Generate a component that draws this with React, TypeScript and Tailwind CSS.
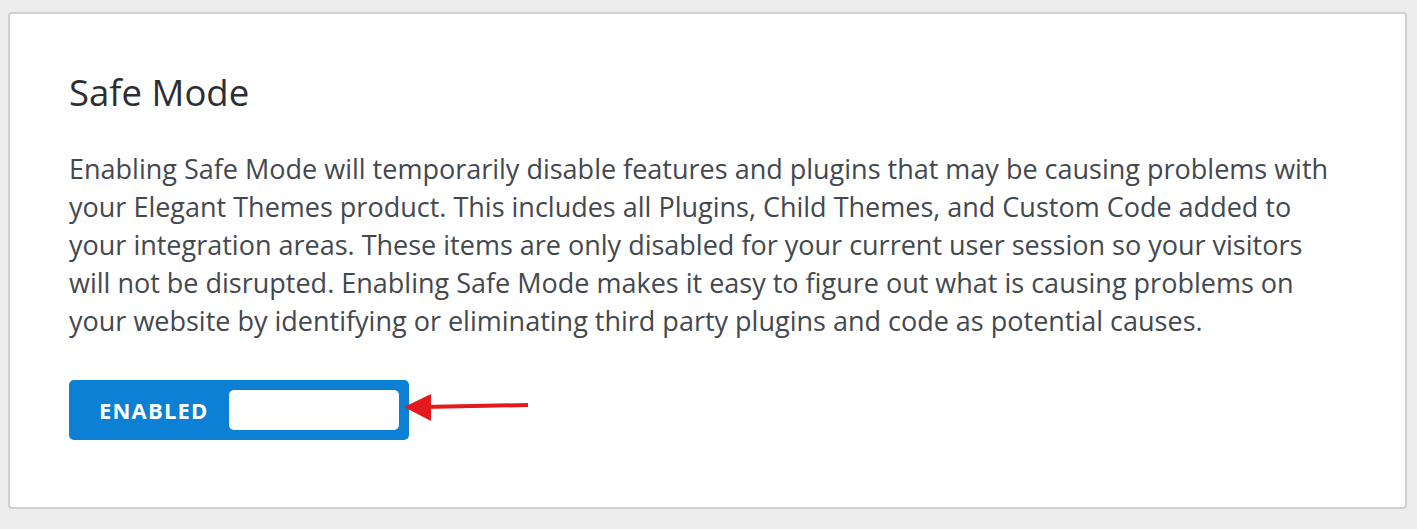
const lines = [
  "Enabling Safe Mode will temporarily disable features and plugins that may be causing problems with",
  "your Elegant Themes product. This includes all Plugins, Child Themes, and Custom Code added to",
  "your integration areas. These items are only disabled for your current user session so your visitors",
  "will not be disrupted. Enabling Safe Mode makes it easy to figure out what is causing problems on",
  "your website by identifying or eliminating third party plugins and code as potential causes.",
]

export default function App() {
  return (
    <div
      className="min-h-[529px] w-full bg-[#ededee] pt-3 pl-2 pr-[10px] pb-5"
      style={{ fontFamily: '"Open Sans", "Noto Sans", sans-serif' }}
    >
      <div className="h-[497px] rounded-[4px] border-2 border-[#d0d0d2] bg-white pl-[59px] pr-[40px] pt-[56px]">
        <h1 className="text-[36.5px] font-normal leading-[44px] text-[#2b2e33]">Safe Mode</h1>
        <p className="mt-[36px] whitespace-nowrap text-[27px] leading-[38px] text-[#43484e]">
          {lines.map((l, i) => (
            <span key={i} className="block">
              {l}
            </span>
          ))}
        </p>
        <div className="mt-[40px] flex items-center">
          <div className="flex h-[60px] w-[340px] items-center rounded-[5px] bg-[#0b80d4] pl-[30px] pr-[10px]">
            <span className="text-[22px] font-bold tracking-[1.2px] text-white">ENABLED</span>
            <div className="ml-auto h-[40px] w-[170px] rounded-[5px] bg-white" />
          </div>
          <svg width="125" height="34" viewBox="0 0 125 34" className="-ml-[5px]">
            <line x1="20" y1="14" x2="124" y2="12" stroke="#e3191b" strokeWidth="4" />
            <polygon points="0,14 27,1 27,28" fill="#e3191b" />
          </svg>
        </div>
      </div>
    </div>
  )
}
